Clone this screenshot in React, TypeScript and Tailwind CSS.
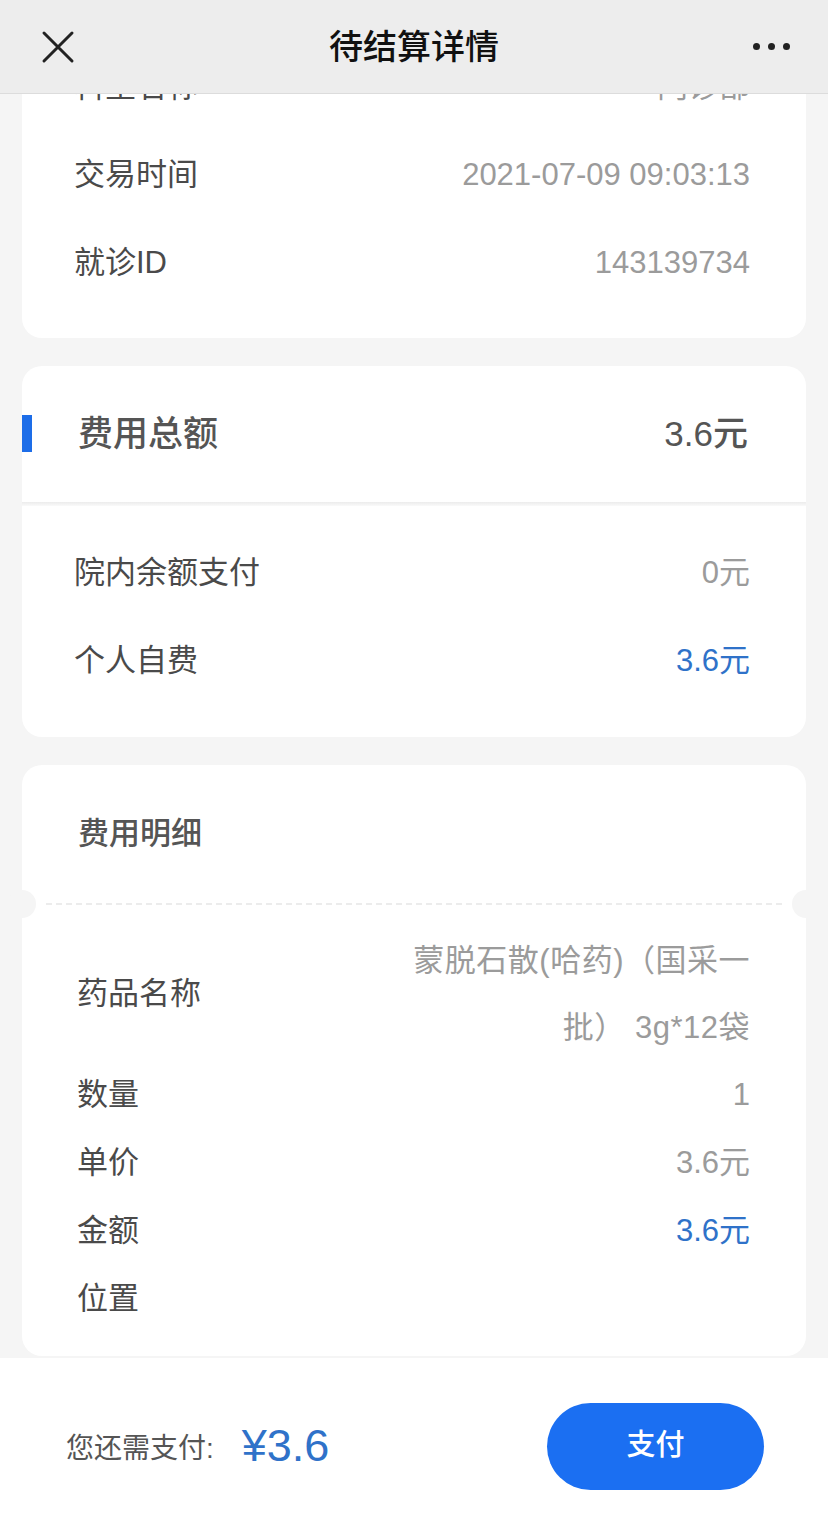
import React from "react";

const FONT = { fontFamily: '"Liberation Sans", "Noto Sans CJK SC", sans-serif' };

function Row({ label, value, blue }: { label: string; value?: string; blue?: boolean }) {
  return (
    <div className="flex h-[88px] items-center justify-between text-[31px]">
      <span className="text-[#4a4a4a]">{label}</span>
      <span className={blue ? "text-[#2f72c9]" : "text-[#9b9b9b]"}>{value}</span>
    </div>
  );
}

function SmallRow({ label, value, blue }: { label: string; value?: string; blue?: boolean }) {
  return (
    <div className="flex h-[68px] items-center justify-between text-[31px]">
      <span className="text-[#4a4a4a]">{label}</span>
      <span className={blue ? "text-[#2f72c9]" : "text-[#9b9b9b]"}>{value}</span>
    </div>
  );
}

export default function App() {
  return (
    <div className="flex h-[1526px] w-[828px] flex-col overflow-hidden bg-[#f5f5f5]" style={FONT}>
      {/* Header */}
      <div className="relative z-10 flex h-[94px] shrink-0 items-center justify-between border-b border-[#dcdcdc] bg-[#ededed] px-[40px]">
        <svg width="34" height="34" viewBox="0 0 34 34" className="ml-[1px]">
          <path d="M3 3 L31 31 M31 3 L3 31" stroke="#222" strokeWidth="3" strokeLinecap="round" />
        </svg>
        <div className="absolute left-0 right-0 top-0 flex h-[94px] items-center justify-center text-[34px] font-medium text-[#111]">
          待结算详情
        </div>
        <div className="mr-[-2px] flex items-center gap-[8px]">
          <span className="h-[7px] w-[7px] rounded-full bg-[#222]" />
          <span className="h-[7px] w-[7px] rounded-full bg-[#222]" />
          <span className="h-[7px] w-[7px] rounded-full bg-[#222]" />
        </div>
      </div>

      {/* Scroll area */}
      <div className="h-[1264px] shrink-0 overflow-hidden">
        <div className="mt-[-67px] flex flex-col gap-[28px] px-[22px]">
          {/* Card 1 */}
          <div className="rounded-[20px] bg-white pb-[31px] pl-[52px] pr-[56px] pt-[16px]">
            <Row label="科室名称" value="门诊部" />
            <Row label="交易时间" value="2021-07-09 09:03:13" />
            <Row label="就诊ID" value="143139734" />
          </div>

          {/* Card 2 */}
          <div className="rounded-[20px] bg-white">
            <div className="relative flex h-[136px] items-center justify-between pl-[56px] pr-[58px]">
              <span className="absolute left-0 top-[49px] h-[37px] w-[10px] bg-[#1d6de8]" />
              <span className="text-[35px] font-medium text-[#555]">费用总额</span>
              <span className="text-[35px] font-medium text-[#555]">3.6元</span>
            </div>
            <div className="h-[4px] bg-gradient-to-b from-[#ececec] to-[#fafafa]" />
            <div className="pb-[32px] pl-[52px] pr-[56px] pt-[23px]">
              <Row label="院内余额支付" value="0元" />
              <Row label="个人自费" value="3.6元" blue />
            </div>
          </div>

          {/* Card 3 */}
          <div className="relative rounded-[20px] bg-white">
            <div className="flex h-[138px] items-center pl-[56px] text-[31px] font-medium text-[#555]">
              费用明细
            </div>
            <div className="relative mx-[24px] h-[2px] border-t-2 border-dashed border-[#ececec]" />
            <span className="absolute left-[-14px] top-[125px] h-[28px] w-[28px] rounded-full bg-[#f5f5f5]" />
            <span className="absolute right-[-14px] top-[125px] h-[28px] w-[28px] rounded-full bg-[#f5f5f5]" />
            <div className="pb-[23px] pl-[55px] pr-[56px] pt-[22px]">
              <div className="flex h-[134px] items-center justify-between text-[31px]">
                <span className="text-[#4a4a4a]">药品名称</span>
                <span className="w-[350px] text-right leading-[67px] tracking-[0.5px] text-[#9b9b9b]">
                  蒙脱石散(哈药)（国采一批） 3g*12袋
                </span>
              </div>
              <SmallRow label="数量" value="1" />
              <SmallRow label="单价" value="3.6元" />
              <SmallRow label="金额" value="3.6元" blue />
              <SmallRow label="位置" />
            </div>
          </div>
        </div>
      </div>

      {/* Bottom bar */}
      <div className="flex h-[168px] shrink-0 items-center justify-between bg-white pl-[66px] pr-[64px] pt-[8px]">
        <div className="flex items-center">
          <span className="mt-[6px] text-[28px] text-[#555]">您还需支付:</span>
          <span className="ml-[28px] text-[45px] text-[#2f72c9]">¥3.6</span>
        </div>
        <button className="flex h-[87px] w-[217px] items-center justify-center rounded-full bg-[#1b6ff2] text-[29px] font-medium text-white">
          支付
        </button>
      </div>
    </div>
  );
}
